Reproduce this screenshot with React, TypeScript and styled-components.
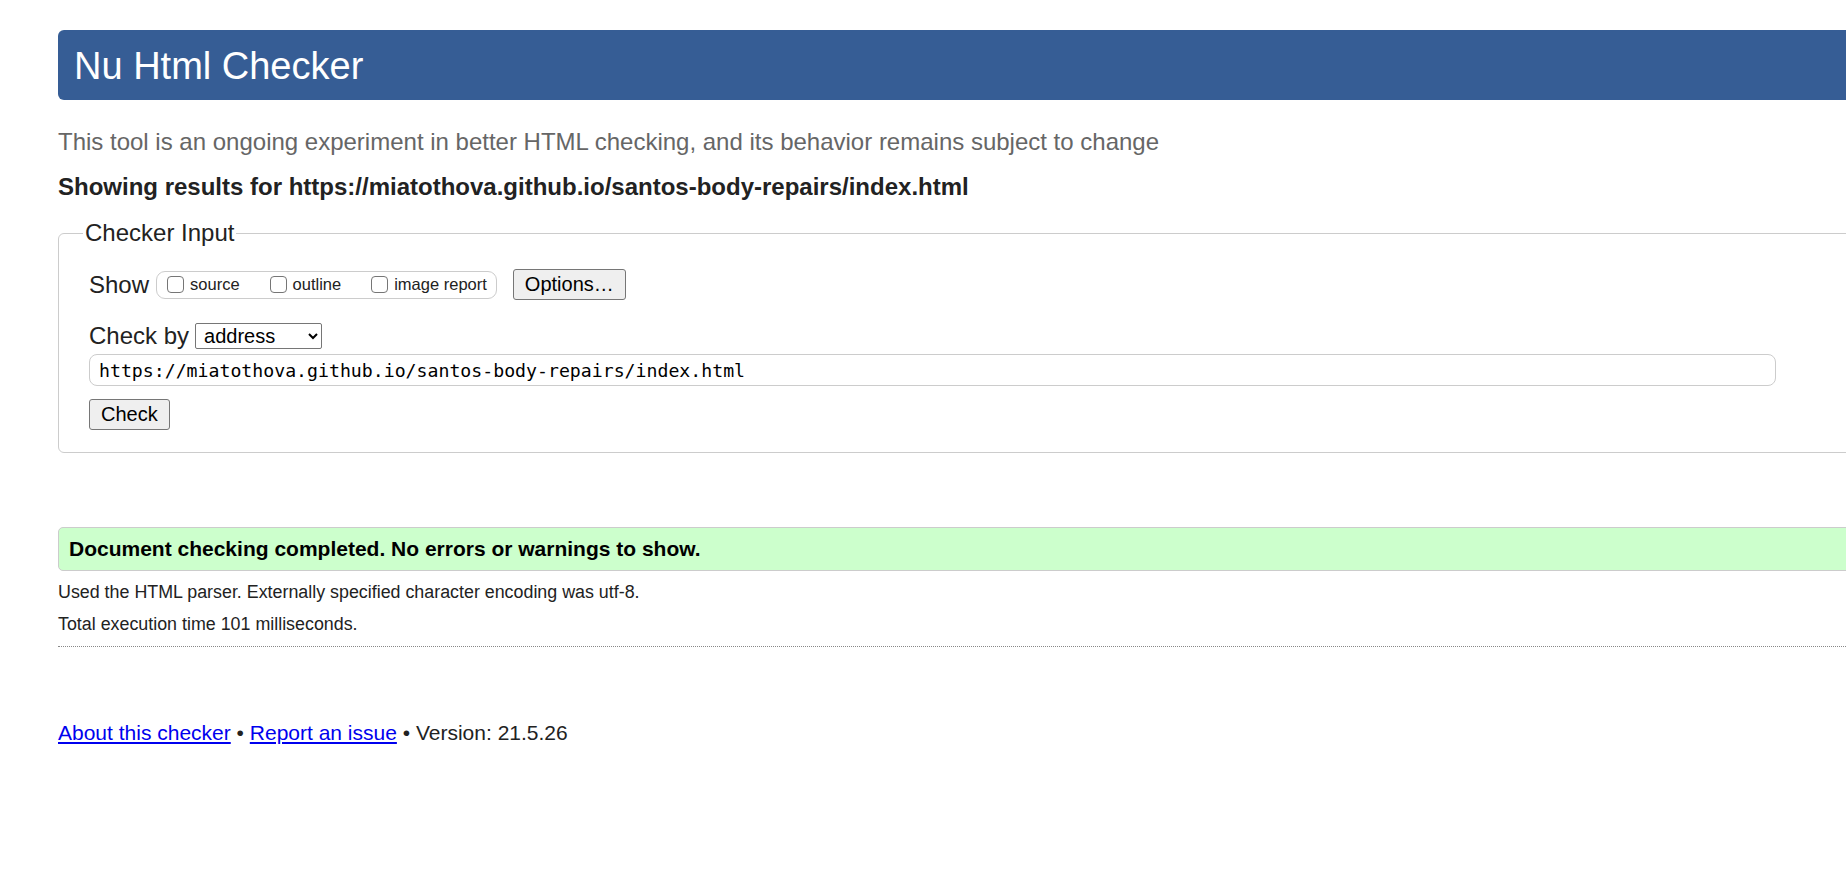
import React from 'react'
import styled, { createGlobalStyle } from 'styled-components'

const GlobalStyle = createGlobalStyle`
  html, body {
    margin: 0;
    padding: 0;
    overflow: hidden;
    background: #fff;
  }
  body {
    font-family: 'Liberation Sans', Arial, sans-serif;
    color: #222;
  }
`

const Page = styled.div`
  width: 1900px;
  padding: 30px 0 0 58px;
`

const Title = styled.h1`
  margin: 0;
  height: 70px;
  padding: 0 16px;
  background: #365d95;
  color: #fff;
  font-size: 38px;
  font-weight: normal;
  line-height: 72px;
  border-radius: 6px 0 0 6px;
`

const Intro = styled.p`
  margin: 28px 0 0;
  font-size: 24px;
  color: #666;
`

const ResultsFor = styled.p`
  margin: 17px 0 0;
  font-size: 24px;
  font-weight: bold;
  color: #222;
`

const InputBox = styled.fieldset`
  margin: 18px 0 0;
  padding: 0 0 22px 30px;
  border: 1px solid #ccc;
  border-radius: 6px 0 0 6px;
`

const Legend = styled.legend`
  margin-left: -6px;
  padding: 0 2px;
  font-size: 24px;
  color: #222;
`

const Row = styled.div<{ $top: number }>`
  display: flex;
  align-items: center;
  gap: 6px;
  margin-top: ${({ $top }) => $top}px;
`

const Label = styled.span`
  font-size: 24px;
  color: #222;
`

const ShowGroup = styled.div`
  display: flex;
  align-items: center;
  gap: 30px;
  height: 26px;
  padding: 0 9px 0 10px;
  margin-left: 1px;
  border: 1px solid #ccc;
  border-radius: 9px;
`

const ShowItem = styled.label`
  display: flex;
  align-items: center;
  gap: 6px;
  font-size: 16.5px;
  color: #222;
`

const Box = styled.input`
  appearance: none;
  margin: 0;
  width: 17px;
  height: 17px;
  border: 1px solid #767676;
  border-radius: 4px;
  background: #fff;
`

const Button = styled.button<{ $gap?: number }>`
  height: 31px;
  margin-left: ${({ $gap }) => $gap ?? 0}px;
  padding: 0 11px;
  font-family: 'Liberation Sans', Arial, sans-serif;
  font-size: 20px;
  color: #000;
  background: #efefef;
  border: 1px solid #767676;
  border-radius: 3px;
`

const Select = styled.select`
  width: 127px;
  height: 26px;
  padding: 0 0 0 4px;
  font-family: 'Liberation Sans', Arial, sans-serif;
  font-size: 20px;
  color: #000;
  background: #fff;
  border: 1px solid #767676;
  border-radius: 2px;
`

const UrlInput = styled.input`
  display: block;
  box-sizing: border-box;
  width: 1687px;
  height: 32px;
  margin-top: 4px;
  padding: 0 9px;
  font-family: 'DejaVu Sans Mono', 'Liberation Mono', monospace;
  font-size: 18.2px;
  color: #000;
  background: #fff;
  border: 1px solid #ccc;
  border-radius: 8px;
`

const Success = styled.p`
  margin: 74px 0 0;
  padding: 9px 10px;
  font-size: 21px;
  font-weight: bold;
  color: #000;
  background: #ccffcc;
  border: 1px solid #ccc;
  border-radius: 5px 0 0 5px;
`

const Details = styled.div`
  display: flex;
  flex-direction: column;
  gap: 10.5px;
  padding: 11px 0;
  border-bottom: 1px dotted #888;
`

const Note = styled.p`
  margin: 0;
  font-size: 17.85px;
  color: #222;
`

const Footer = styled.p`
  margin: 74px 0 0;
  font-size: 21px;
  color: #222;
`

const Link = styled.a`
  color: #0000ee;
  text-decoration: underline;
`

const url = 'https://miatothova.github.io/santos-body-repairs/index.html'

export default function App() {
  return (
    <Page>
      <GlobalStyle />
      <Title>Nu Html Checker</Title>
      <Intro>This tool is an ongoing experiment in better HTML checking, and its behavior remains subject to change</Intro>
      <ResultsFor>Showing results for {url}</ResultsFor>
      <InputBox>
        <Legend>Checker Input</Legend>
        <Row $top={22}>
          <Label>Show</Label>
          <ShowGroup>
            {['source', 'outline', 'image report'].map((name) => (
              <ShowItem key={name}>
                <Box type="checkbox" />
                {name}
              </ShowItem>
            ))}
          </ShowGroup>
          <Button $gap={10}>Options…</Button>
        </Row>
        <Row $top={22}>
          <Label>Check by</Label>
          <Select defaultValue="address">
            <option value="address">address</option>
            <option value="file">file upload</option>
            <option value="textarea">text input</option>
          </Select>
        </Row>
        <UrlInput type="url" defaultValue={url} />
        <Row $top={13}>
          <Button>Check</Button>
        </Row>
      </InputBox>
      <Success>Document checking completed. No errors or warnings to show.</Success>
      <Details>
        <Note>Used the HTML parser. Externally specified character encoding was utf-8.</Note>
        <Note>Total execution time 101 milliseconds.</Note>
      </Details>
      <Footer>
        <Link href="#about">About this checker</Link> • <Link href="#issue">Report an issue</Link> • Version: 21.5.26
      </Footer>
    </Page>
  )
}
